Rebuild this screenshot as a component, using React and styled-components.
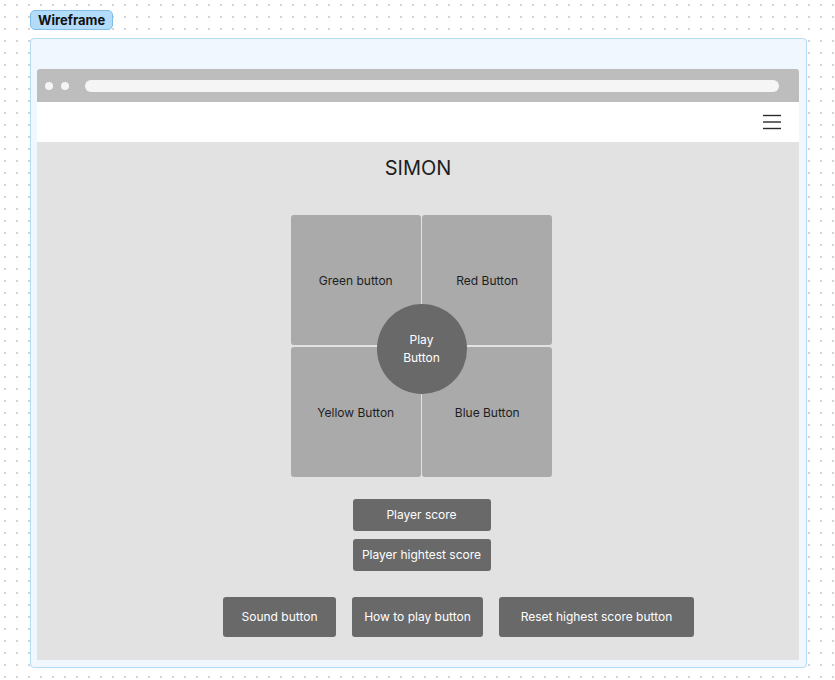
import React from 'react';
import styled, { createGlobalStyle } from 'styled-components';

const GlobalStyle = createGlobalStyle`
    html, body {
        margin: 0;
        padding: 0;
    }
    body {
        font-family: Inter, "Noto Sans", sans-serif;
        background-color: #ffffff;
        background-image: radial-gradient(circle, #d2d2d2 0.7px, transparent 1.1px);
        background-size: 12px 12px;
        background-position: -1px -1px;
        min-height: 680px;
    }
`;

const Page = styled.div`
    padding: 10px 0 0 30px;
    display: flex;
    flex-direction: column;
    align-items: flex-start;
    gap: 8px;
`;

const Label = styled.div`
    height: 20px;
    box-sizing: border-box;
    padding: 0 7px;
    display: flex;
    align-items: center;
    background-color: #b3dcfb;
    border: 1px solid #82bde6;
    border-radius: 5px;
    font-size: 13px;
    font-weight: 700;
    color: #111;
`;

const Frame = styled.div`
    width: 777px;
    height: 630px;
    box-sizing: border-box;
    padding: 30px 7px 7px 6px;
    background-color: #f0f7fe;
    border: 1px solid #b5dbf5;
    border-radius: 4px;
    display: flex;
    flex-direction: column;
`;

const TopBar = styled.div`
    height: 33px;
    background-color: #bdbdbd;
    border-radius: 3px 3px 0 0;
    display: flex;
    align-items: center;
    padding: 0 20px 0 8px;
    gap: 8px;
`;

const Dot = styled.span`
    width: 8px;
    height: 8px;
    border-radius: 50%;
    background-color: #f5f5f5;
`;

const Address = styled.div`
    flex: 1;
    height: 12px;
    margin-left: 8px;
    border-radius: 6px;
    background-color: #f5f5f5;
`;

const Nav = styled.div`
    height: 40px;
    background-color: #ffffff;
    display: flex;
    justify-content: flex-end;
    align-items: center;
    padding-right: 18px;
`;

const Content = styled.div`
    flex: 1;
    background-color: #e2e2e2;
    display: flex;
    flex-direction: column;
    align-items: center;
    padding-top: 14px;
`;

const Title = styled.h1`
    margin: 0;
    font-size: 20px;
    font-weight: 400;
    line-height: 24px;
    color: #1e1e1e;
`;

const Board = styled.div`
    position: relative;
    margin: 35px 0 0 7px;
    display: grid;
    grid-template-columns: 130px 130px;
    grid-template-rows: 130px 130px;
    gap: 1.5px;
`;

const Pad = styled.div`
    background-color: #aaaaaa;
    border-radius: 3px;
    display: flex;
    justify-content: center;
    align-items: center;
    padding-top: 1px;
    font-size: 12px;
    color: #1e1e1e;
`;

const PlayButton = styled.div`
    position: absolute;
    left: 50%;
    top: calc(50% + 3px);
    width: 90px;
    height: 90px;
    transform: translate(-50%, -50%);
    border-radius: 50%;
    background-color: #696969;
    color: #ffffff;
    font-size: 12px;
    line-height: 18px;
    display: flex;
    justify-content: center;
    align-items: center;
    text-align: center;
`;

const Scores = styled.div`
    margin: 22px 0 0 7px;
    display: flex;
    flex-direction: column;
    gap: 8px;
`;

const ActionRow = styled.div`
    align-self: stretch;
    margin-top: 26px;
    padding-left: 186px;
    display: flex;
    gap: 16px;
`;

const Button = styled.div`
    height: ${p => p.$tall ? '40px' : '32px'};
    width: ${p => p.$w}px;
    background-color: #696969;
    border-radius: 3px;
    color: #ffffff;
    font-size: 12px;
    display: flex;
    justify-content: center;
    align-items: center;
`;

const Hamburger = () => (
    <svg width="18" height="16" viewBox="0 0 18 16">
        <g stroke="#2a2a2a" strokeWidth="1.4">
            <line x1="0" y1="1.5" x2="18" y2="1.5" />
            <line x1="0" y1="8" x2="18" y2="8" />
            <line x1="0" y1="14.5" x2="18" y2="14.5" />
        </g>
    </svg>
);

const App = () => {
    return (
        <>
            <GlobalStyle />
            <Page>
                <Label>Wireframe</Label>
                <Frame>
                    <TopBar>
                        <Dot />
                        <Dot />
                        <Address />
                    </TopBar>
                    <Nav>
                        <Hamburger />
                    </Nav>
                    <Content>
                        <Title>SIMON</Title>
                        <Board>
                            <Pad>Green button</Pad>
                            <Pad>Red Button</Pad>
                            <Pad>Yellow Button</Pad>
                            <Pad>Blue Button</Pad>
                            <PlayButton>Play<br />Button</PlayButton>
                        </Board>
                        <Scores>
                            <Button $w={138}>Player score</Button>
                            <Button $w={138}>Player hightest score</Button>
                        </Scores>
                        <ActionRow>
                            <Button $tall $w={113}>Sound button</Button>
                            <Button $tall $w={131}>How to play button</Button>
                            <Button $tall $w={195}>Reset highest score button</Button>
                        </ActionRow>
                    </Content>
                </Frame>
            </Page>
        </>
    );
};

export default App;
